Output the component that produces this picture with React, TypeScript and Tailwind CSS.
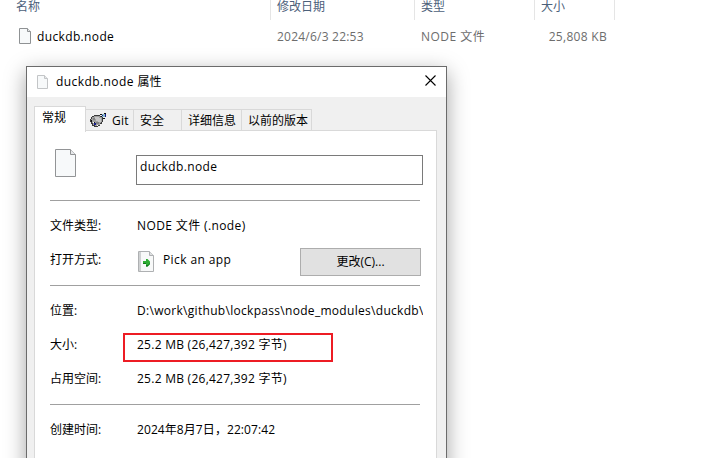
import React from "react";

function FileIcon({ w, h, fold, stroke = "#8f9294" }: { w: number; h: number; fold: number; stroke?: string }) {
  return (
    <svg width={w} height={h} viewBox={`0 0 ${w} ${h}`} className="block shrink-0">
      <path
        d={`M.5 .5H${w - fold - 0.5}L${w - 0.5} ${fold + 0.5}V${h - 0.5}H.5Z`}
        fill="#f7f9fa"
        stroke={stroke}
      />
      <path d={`M${w - fold - 0.5} .5V${fold + 0.5}H${w - 0.5}`} fill="#e6e8ea" stroke={stroke} />
    </svg>
  );
}

function GitIcon() {
  return (
    <svg width="17" height="15" viewBox="0 0 17 15" className="block shrink-0" shapeRendering="crispEdges">
      <path d="M4 2h6v1h3v6h-1v2h-2v2H8v1H4v-1H2v-2H1V9H0V6h1V4h1V3h2z" fill="#3a3a3a" />
      <path d="M4 3h6v1h2v5h-1v1h-1v2H8v1H5v-1H3v-2H2V9H1V6h1V4h2z" fill="#a0a0a0" />
      <path d="M5 4h4v1h2v4H8V8H6V6H5z" fill="#c6c6c6" />
      <path d="M3 5h2v2H3zM6 9h3v2H6z" fill="#808080" />
      <path d="M1 7h1v2H1zM4 9h1v1H4zM10 1h2v1h-2zM14 0h2v1h-2zM13 5h2v1h-2zM11 3h1v1h-1z" fill="#111" />
      <path d="M12 1h3v3h-3z" fill="#8bb8c8" />
      <path d="M15 1h1v3h-1zM4 10h2v2H4zM12 2h1v1h-1z" fill="#151c8a" />
      <path d="M7 12h1v1H7zM3 9h1v1H3z" fill="#fff" />
    </svg>
  );
}

function AppIcon() {
  return (
    <svg width="16" height="21" viewBox="0 0 16 21" className="block shrink-0">
      <path d="M.5 .5H11.5L15.5 4.5V20.5H.5Z" fill="#f8f9f9" stroke="#aeb0b2" />
      <path d="M1 1h2v19H1z" fill="#cfd1d2" />
      <path d="M11.5 .5V4.5H15.5" fill="#dfe1e2" stroke="#aeb0b2" />
      <path d="M5 10H8V8H9.5L12 10.5V13L9.500 15.500H8V13H5Z" fill="#2fae35" />
      <path d="M5 12H8V13H5ZM8 14H10L12 12V13L9.500 15.500H8Z" fill="#12791b" />
    </svg>
  );
}

function Row({ label, children }: { label: string; children: React.ReactNode }) {
  return (
    <div className="flex h-5 items-center">
      <span className="w-[87px] shrink-0">{label}</span>
      <div className="relative h-5 w-[286px] leading-5">{children}</div>
    </div>
  );
}

function Rule() {
  return <div className="h-px w-[370px] bg-[#a0a0a0]" />;
}

const tab = "flex h-[22px] items-center border-t border-r border-[#d9d9d9] bg-[#f0f0f0]";
const column = "border-r border-[#e5e5e5] leading-[14px]";

export default function App() {
  return (
    <div className="relative h-[458px] w-[708px] overflow-hidden bg-white font-['Open_Sans','Noto_Sans_CJK_SC',sans-serif] text-[12px] leading-5 whitespace-pre text-black">
      <div className="flex h-5 text-[#4c607a]">
        <div className={`${column} w-[271px] pl-4`}>名称</div>
        <div className={`${column} w-[144px] pl-1.5`}>修改日期</div>
        <div className={`${column} w-[120px] pl-1.5`}>类型</div>
        <div className={`${column} w-[80px] pl-1.5`}>大小</div>
      </div>
      <div className="flex h-8 items-center pl-[19px] text-[#6d6d6d]">
        <FileIcon w={12} h={16} fold={3} />
        <div className="flex pt-0.5">
          <span className="ml-1.5 w-[240px] tracking-[0.36px] text-black">duckdb.node</span>
          <span className="w-[144px] tracking-[0.22px]">2024/6/3 22:53</span>
          <span className="w-[120px] tracking-[0.5px]">NODE 文件</span>
          <span className="w-[66px] text-right tracking-[0.3px]">25,808 KB</span>
        </div>
      </div>

      <div className="absolute top-[66px] left-[26px] flex h-[420px] w-[421px] flex-col border border-[#6b6b6b] bg-[#f0f0f0] shadow-[0_6px_20px_rgba(0,0,0,0.36)]">
        <div className="flex h-[30px] items-center bg-white pl-2.5">
          <FileIcon w={11} h={14} fold={3} stroke="#c3c5c7" />
          <span className="ml-2 grow"><span className="tracking-[0.42px]">duckdb.node </span>属性</span>
          <svg width="11" height="11" viewBox="0 0 11 11" className="mr-2.5 mb-[3px] block">
            <path d="M.5 .5L10.500 10.500M10.500 .5L.5 10.500" stroke="#000" strokeWidth="1.1" />
          </svg>
        </div>
        <div className="flex h-[34px] items-end pl-[7px]">
          <div className="z-10 -mb-px flex h-[26px] w-[52px] border border-b-0 border-[#d9d9d9] bg-white pt-px pl-[7px]">常规</div>
          <div className={`${tab} w-[48px] pl-[4px]`}>
            <GitIcon />
            <span className="ml-[5px] tracking-[0.3px]">Git</span>
          </div>
          <div className={`${tab} w-[48px] pl-1.5`}>安全</div>
          <div className={`${tab} w-[60px] pl-1.5`}>详细信息</div>
          <div className={`${tab} w-[70px] pl-1.5`}>以前的版本</div>
        </div>
        <div className="-mt-px ml-[7px] flex w-[403px] grow flex-col border border-[#d9d9d9] bg-white pt-[18px] pl-[15px]">
          <div className="flex h-9">
            <div className="w-[86px] pl-[5px]">
              <FileIcon w={21} h={28} fold={5} stroke="#929496" />
            </div>
            <div className="mt-1.5 h-[30px] w-[287px] border border-[#7a7a7a] pt-px pl-[3px] tracking-[0.38px]">duckdb.node</div>
          </div>
          <div className="mt-[15px]"><Rule /></div>
          <div className="mt-[15px]"><Row label="文件类型:"><span className="tracking-[0.38px]">NODE 文件 (.node)</span></Row></div>
          <div className="mt-3 flex h-7">
            <span className="mt-0.5 w-[88px]">打开方式:</span>
            <div className="mt-[3px] w-[25px]"><AppIcon /></div>
            <span className="mt-0.5 w-[137px] tracking-[0.4px]">Pick an app</span>
            <button className="flex h-7 w-[121px] items-center justify-center border border-[#adadad] bg-[#e1e1e1]">更改(C)...</button>
          </div>
          <div className="mt-[9px]"><Rule /></div>
          <div className="mt-[15px] flex flex-col gap-3.5">
            <Row label="位置:"><div className="w-[286px] overflow-hidden tracking-[0.3px]">D:\work\github\lockpass\node_modules\duckdb\</div></Row>
            <Row label="大小:">
              <span className="tracking-[0.26px]">25.2 MB (26,427,392 字节)</span>
              <div className="absolute -top-0.5 -left-3.5 h-[29px] w-[210px] border-2 border-[#ed1c24]" />
            </Row>
            <Row label="占用空间:"><span className="tracking-[0.26px]">25.2 MB (26,427,392 字节)</span></Row>
          </div>
          <div className="mt-[15px]"><Rule /></div>
          <div className="mt-[15px]"><Row label="创建时间:"><span className="tracking-[0.08px]">2024年8月7日，22:07:42</span></Row></div>
        </div>
      </div>
    </div>
  );
}
